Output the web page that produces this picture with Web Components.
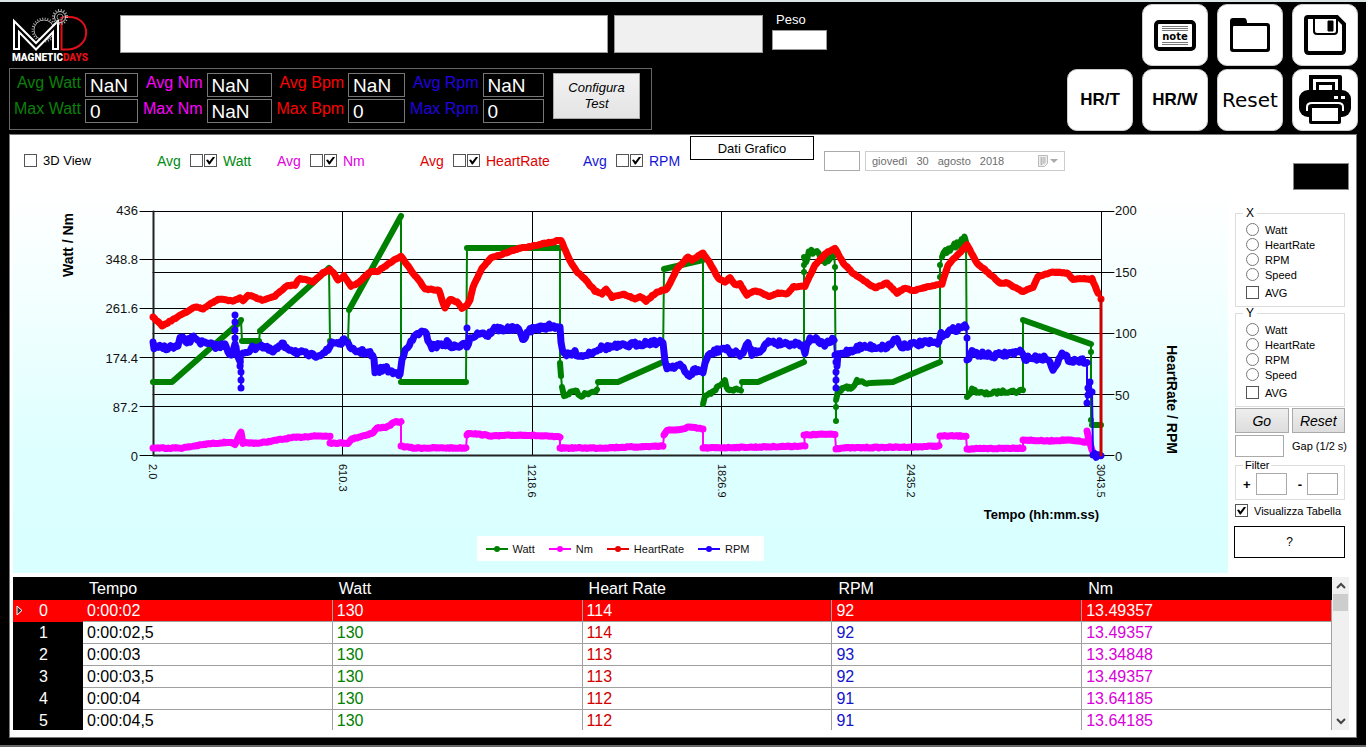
<!DOCTYPE html>
<html lang="it">
<head>
<meta charset="utf-8">
<title>Magnetic Days</title>
<style>
  body { margin: 0; background: #000; font-family: "Liberation Sans", Arial, sans-serif; }
</style>
</head>
<body>
<md-app></md-app>
<script>
const define = (name, html, setup) => {
  const template = document.createElement('template');
  template.innerHTML = html;
  customElements.define(name, class extends HTMLElement {
    connectedCallback() {
      if (this.shadowRoot) return;
      const root = this.attachShadow({ mode: 'open' });
      root.append(template.content.cloneNode(true));
      if (setup) setup(this, root);
    }
  });
};

// Shared look of tick boxes and radio buttons
const controls = `
  * { box-sizing: border-box; }
  input[type=checkbox], input[type=radio] {
    appearance: none; flex: none; width: 13px; height: 13px; margin: 0;
    border: 1px solid #555; background: #fff; display: grid; place-items: center;
  }
  input[type=radio] { border-radius: 50%; border-color: #777; }
  input[type=checkbox]:checked::before {
    content: ""; width: 9px; height: 8px; background: #000;
    clip-path: polygon(0 45%, 22% 38%, 38% 62%, 80% 0, 100% 10%, 42% 100%, 32% 100%);
  }
`;

define('md-logo', `
  <style>
    :host { display: block; width: 76px; }
    svg { display: block; }
    .name { font: 900 10px/13px Roboto, sans-serif; color: #fff; white-space: nowrap; }
    .name b { font-weight: 900; color: #e01018; }
  </style>
  <svg width="76" height="42" viewBox="0 0 76 42" fill="none">
    <circle cx="32" cy="21" r="10" stroke="#aaa" stroke-width="1"/>
    <circle cx="32" cy="21" r="11.5" stroke="#aaa" stroke-width="2" stroke-dasharray="1 1.6"/>
    <path d="M2 40V12L24 34 46 12V40H41V23L24 40.500 7 23V40z" stroke="#fff" stroke-width="2" fill="#000"/>
    <path d="M49.500 8V40.500H56C80 39 80 8 57 8H50" stroke="#e01018" stroke-width="2"/>
    <circle cx="48" cy="8" r="5.5" stroke="#ccc"/>
    <circle cx="48" cy="8" r="7" stroke="#bbb" stroke-width="2" stroke-dasharray="1 1.8"/>
    <circle cx="48" cy="8" r="3" stroke="#888"/>
  </svg>
  <div class="name">MAGNETIC<b>DAYS</b></div>
`);

define('md-stat', `
  <style>
    * { box-sizing: border-box; }
    :host { display: grid; grid-template-columns: auto var(--box, 56px); gap: 2px 4px; }
    label { font-size: 16px; line-height: 20px; height: 24px; text-align: right; white-space: nowrap; }
    input { width: 100%; height: 24px; padding: 2px 3px 0 4px; border: 1px solid #777; background: #000; color: #fff; font: 19px/20px "Liberation Sans", sans-serif; }
  </style>
  <label for="avg"></label><input id="avg" readonly>
  <label for="max"></label><input id="max" readonly>
`, (el, root) => {
  const [a, m] = root.querySelectorAll('label');
  const n = el.getAttribute('name');
  a.textContent = 'Avg ' + n;
  m.textContent = 'Max ' + n;
  root.querySelector('#avg').value = el.getAttribute('avg');
  root.querySelector('#max').value = el.getAttribute('max');
});

define('md-tile', `
  <style>
    :host { display: block; }
    button {
      width: 100%; height: 62px; padding: 0; border: 1px solid #ccc; border-radius: 10px; background: #fff; color: #000;
      display: grid; place-items: center; font: bold 17px "Liberation Sans", sans-serif;
    }
    :host([plain]) button { font: 20px "DejaVu Sans", Verdana, sans-serif; }
  </style>
  <button type="button"><slot></slot></button>
`, (el, root) => {
  if (el.title) root.querySelector('button').setAttribute('aria-label', el.title);
});

define('md-series', `
  <style>
    ${controls}
    :host { display: flex; align-items: center; font-size: 14px; line-height: 16px; }
    label.avg { width: 33px; }
    input#show { margin: 0 6px 0 1px; }
  </style>
  <label class="avg" for="avg">Avg</label>
  <input type="checkbox" id="avg"><input type="checkbox" id="show" checked>
  <label for="show"><slot></slot></label>
`);

define('md-axis', `
  <style>
    ${controls}
    :host { display: block; }
    fieldset { margin: 0; padding: 3px 0 6px 10px; border: 1px solid #dcdcdc; min-width: 0; }
    legend { padding: 0 3px; margin-left: -3px; font-size: 12px; line-height: 12px; }
    label { display: flex; align-items: center; gap: 6px; height: 15px; font-size: 11px; }
    label.check { margin-top: 3px; }
  </style>
  <fieldset><legend></legend>
    <label><input type="radio" name="v">Watt</label>
    <label><input type="radio" name="v">HeartRate</label>
    <label><input type="radio" name="v">RPM</label>
    <label><input type="radio" name="v">Speed</label>
    <label class="check"><input type="checkbox">AVG</label>
  </fieldset>
`, (el, root) => { root.querySelector('legend').textContent = el.getAttribute('name'); });

define('md-chart', `
  <style>
    :host {
      display: grid; grid-template: 245px auto / 40px 100px 1fr 42px 85px; padding-top: 21px; padding-bottom: 12px;
      background: linear-gradient(#fff, #f2ffff 30%, #dff 70%, #d9ffff); color: #111; font-size: 13px;
    }
    .title { font-size: 14px; line-height: 16px; font-weight: bold; color: #000; writing-mode: vertical-rl; }
    .title.left { transform: rotate(180deg); justify-self: end; align-self: start; margin: 2px -23px 2px 0; }
    .title.right { align-self: end; justify-self: start; margin: 0 0 2px 21px; }
    .scale { display: flex; flex-direction: column; justify-content: space-between; margin: -8px 0; line-height: 15px; }
    .scale.y1 { align-items: flex-end; padding-right: 15px; }
    .scale.y2 { padding-left: 14px; }
    svg { display: block; width: 100%; height: 245px; overflow: visible; }
    svg path { vector-effect: non-scaling-stroke; fill: none; stroke-linecap: round; stroke-linejoin: round; }
    .under { grid-column: 3; }
    .ticks { display: flex; justify-content: space-between; margin: 8px -7px 0; font-size: 11px; line-height: 14px; height: 38px; }
    .ticks span { writing-mode: vertical-rl; }
    .xname { text-align: right; font-weight: bold; line-height: 20px; padding: 3px 2px 0 0; color: #000; }
    .legend {
      grid-column: 1 / -1; justify-self: center; margin: 11px 0 0 0; height: 25px; padding: 0 15px 0 9px; background: #fff;
      display: flex; align-items: center; gap: 14px; font-size: 11px;
    }
    .legend span { display: flex; align-items: center; gap: 5px; }
    .legend i { width: 22px; height: 2px; display: grid; place-items: center; align-content: center; background: currentColor; }
    .legend i::before { content: ""; width: 6px; height: 6px; border-radius: 50%; background: currentColor; }
    .legend b { font-weight: normal; color: #111; }
  </style>
  <div class="title left">Watt / Nm</div>
  <div class="scale y1"><span>436</span><span>348.8</span><span>261.6</span><span>174.4</span><span>87.2</span><span>0</span></div>
  <svg viewBox="153 211 948 245" preserveAspectRatio="none" role="img" aria-label="Watt, Nm, HeartRate, RPM"></svg>
  <div class="scale y2"><span>200</span><span>150</span><span>100</span><span>50</span><span>0</span></div>
  <div class="title right">HeartRate / RPM</div>
  <div class="under">
    <div class="ticks"><span>2.0</span><span>610.3</span><span>1218.6</span><span>1826.9</span><span>2435.2</span><span>3043.5</span></div>
    <div class="xname">Tempo (hh:mm.ss)</div>
  </div>
  <div class="legend">
    <span style="color:#008000"><i></i><b>Watt</b></span><span style="color:#f0f"><i></i><b>Nm</b></span>
    <span style="color:#e60000"><i></i><b>HeartRate</b></span><span style="color:#20f"><i></i><b>RPM</b></span>
  </div>
`, (el, root) => {
  const svg = root.querySelector('svg');
  let seed = 7;
  const rnd = () => (seed = (seed * 16807) % 2147483647) / 2147483647 - 0.5;
  const path = (d, stroke, w) => {
    const p = document.createElementNS('http://www.w3.org/2000/svg', 'path');
    p.setAttribute('d', d); p.setAttribute('stroke', stroke); p.setAttribute('stroke-width', w);
    svg.append(p);
  };
  let grid = '';
  for (const y of [211.5, 259.5, 308.5, 357.5, 406.5, 455.5]) grid += `M140 ${y}H1101`;
  for (const y of [272.5, 333.5, 394.5]) grid += `M153 ${y}H1114`;
  for (const y of [211.5, 455.5]) grid += `M1101 ${y}H1114`;
  for (const x of [342.5, 532.5, 721.5, 911.5, 1101.5]) grid += `M${x} 211.5V455.5`;
  path(grid, '#000', 1);
  path('M153.500 211.500V455.500H1101', '#222', 2);

  // "|" separates runs of dense samples; thin lines join one run to the next.
  // A leading "~n" sets the jitter of the run.
  const series = (text, color, noise, width) => {
    let thin = '', thick = '', first = true;
    for (let run of text.split('|')) {
      let n = noise;
      run = run.trim().replace(/^~([\d.]+)\s*/, (_, v) => { n = +v; return ''; });
      const pts = run.split(/\s+/).map(p => p.split(',').map(Number));
      thick += `M${pts[0]}h0.01`;
      if (!first) thin += 'L' + pts[0];
      first = false;
      pts.slice(1).forEach(([x, y], i) => {
        const [px, py] = pts[i], steps = n ? Math.max(1, Math.round(Math.abs(x - px) / 1.5)) : 1;
        for (let s = 1; s <= steps; s++) {
          const t = s / steps;
          thick += `L${(px + (x - px) * t).toFixed(1)},${(py + (y - py) * t + rnd() * n).toFixed(1)}`;
        }
      });
      thin += 'M' + pts[pts.length - 1];
    }
    path(thin, color, 2);
    path(thick, color, width);
  };

  series(`153,382 172,382 240,322|241,320|242,341 259,341|260,331 313,283 329,268|330,341|348,341|349,310 401,216|401,382 466,382|467,248 560,248
    |560,363 561,376|~3 562,387 564,396 575,390 580,396 588,393 597,390|598,382 618,382 663,362|664,269 703,260
    |~3 703,404 705,397 717,388 725,381 728,391 735,389 741,391|742,382 758,382 804,362|804,272|804,265
    |~9 804,257 806,262 810,250 817,251 825,261 830,260 834,253|835,267|835,288|836,421|836,407|~3 836,400 838,391 848,387 852,389 857,381 862,380 868,384|870,383 893,382 940,362
    |940,277|940,265|~7 942,257 947,252 953,246 960,243 966,239|~3 967,397 972,390 985,394 1000,392 1010,391 1018,392 1023,389|1023,320 1091,344|1091,352|1091,420|1092,425 1101,425`, '#008000', 0, 6);
  series(`153,448 182,448 207,444 230,442 235,445 241,432 243,443 260,443 290,438 313,436 330,436|330,443 348,443 352,439 373,433 377,428 387,427 395,422 401,422
    |401,446 413,448 466,448|467,435 468,433 493,436 525,435 560,437|560,448 600,448 663,446|664,435 667,430 680,430 688,427 703,429
    |703,448 760,447 805,446|804,435 835,434|836,449 840,448 913,447 939,446|940,436 966,436|967,449 1023,448|1023,440 1047,441 1067,440 1085,442|1087,431 1089,440 1092,450`, '#ff00ff', 1, 7);
  series(`153,342 154,348 178,347 180,338 187,342 195,337 202,343 220,347 225,343 231,357 235,345|235,315|235,322|235,330|235,338|236,347 237,357 240,360|240,366|241,372|241,380|241,388|243,353 260,345 273,352
    282,345 297,352 313,356 328,351 332,342 340,343 347,340 350,350 370,353 374,360 375,372 385,368 393,373 400,373 402,357 417,333 425,333 432,347 447,343
    453,347 466,345|467,328|467,347 470,337 482,332 488,336 493,329 517,329 524,339 530,330 543,327 560,326 561,343 565,356 575,353 583,356 600,348
    623,346 653,342 663,343 665,360 667,367 680,365 688,376 695,370 703,372 705,363 710,354 723,348 733,353 743,354 748,343 752,353 760,350 770,341 778,343
    803,344 805,355 807,342 813,338 823,345 834,340|835,355|836,362|836,372|836,380|836,388|837,366 838,355 860,347 887,347 897,338 900,346 923,343 939,343 941,335 953,330 966,326|967,338|967,360 972,353
    993,356 1020,352 1025,358 1047,358 1053,368 1062,355 1070,360 1087,361|1087,403|1088,395|1088,388|1090,382|1092,392|1093,455 1101,455`, '#2200ff', 5, 7);
  series(`153,317 162,326 195,307 203,309 218,299 233,301 240,298 243,301 248,295 262,300 275,296 287,286 295,285 300,278 313,282 323,273 330,270 333,272 338,280
    344,276 351,286 358,283 371,271 377,272 390,263 401,256 412,272 418,279 425,289 439,290 442,300 445,308 450,299 457,302 462,308 467,305 470,300 473,287 482,268
    492,257 500,255 517,249 532,246 561,240 570,261 578,273 583,277 595,291 602,294 606,289 612,297 623,294 635,299 640,296 646,301 657,292 667,289 677,269 688,257
    692,260 703,253 710,263 718,278 725,282 730,278 735,285 740,284 747,295 753,291 760,292 769,297 778,293 787,294 793,287 805,286 815,265 825,254 835,248 843,263
    853,273 875,288 887,283 897,293 905,288 913,291 930,286 942,284 948,265 967,245 977,263 1000,283 1007,283 1023,292 1033,287 1038,277 1053,272 1067,273 1073,279
    1092,279 1098,293|1101,299`, '#ff0000', 1, 7);
  path('M1101 299V455', '#c00', 3);
});

define('md-grid', `
  <style>
    * { box-sizing: border-box; }
    :host { display: flex; overflow: hidden; background: #fff; }
    .view { flex: 1; overflow: hidden; }
    table { width: 100%; border-collapse: separate; border-spacing: 0; table-layout: fixed; font-size: 16px; line-height: 20px; }
    th { font-weight: normal; text-align: left; background: #000; color: #fff; padding: 0; }
    thead th { height: 23px; padding-left: 6px; }
    tbody th { padding: 0 0 0 26px; }
    th:first-child { width: 70px; }
    td { height: 22px; padding: 1px 4px 0; border-right: 1px solid #a0a0a0; border-bottom: 1px solid #a0a0a0; }
    td:nth-child(3) { color: #008000; } td:nth-child(4) { color: #d00000; }
    td:nth-child(5) { color: #1414c8; } td:nth-child(6) { color: #d800d8; }
    tr.on th, tr.on td { background: #f00; color: #fff; }
    tr.on th { padding-left: 3px; }
    tr.on th svg { width: 7px; height: 11px; margin-right: 16px; }
    .bar { width: 17px; background: #f0f0f0; display: flex; flex-direction: column; align-items: center; }
    .bar svg { width: 17px; height: 17px; display: block; }
    .thumb { width: 15px; height: 17px; background: #cdcdcd; margin-bottom: auto; }
  </style>
  <div class="view"><table>
    <thead><tr><th></th><th>Tempo</th><th>Watt</th><th>Heart Rate</th><th>RPM</th><th>Nm</th></tr></thead>
    <tbody></tbody>
  </table></div>
  <div class="bar">
    <svg><path d="M5 11l4-4 4 4" fill="none" stroke="#444" stroke-width="2"/></svg>
    <div class="thumb"></div>
    <svg><path d="M5 6l4 4 4-4" fill="none" stroke="#444" stroke-width="2"/></svg>
  </div>
`, (el, root) => {
  const rows = [
    ['0:00:02', 130, 114, 92, '13.49357'], ['0:00:02,5', 130, 114, 92, '13.49357'], ['0:00:03', 130, 113, 93, '13.34848'],
    ['0:00:03,5', 130, 113, 92, '13.49357'], ['0:00:04', 130, 112, 91, '13.64185'], ['0:00:04,5', 130, 112, 91, '13.64185']
  ];
  root.querySelector('tbody').innerHTML = rows.map((r, i) =>
    `<tr${i ? '' : ' class="on"'}><th scope="row">${i ? '' : '<svg viewBox="0 0 7 11"><path d="M1 1l5 4.500-5 4.500z" fill="#333" stroke="#fff"/></svg>'}${i}</th>${r.map(c => `<td>${c}</td>`).join('')}</tr>`).join('');
});

define('md-app', `
  <style>
    ${controls}
    :host { display: flex; flex-direction: column; min-height: 100vh; box-sizing: border-box; border-top: 2px solid #dde4e6; border-bottom: 2px solid #666; background: #000; }
    input, button { font-family: inherit; border-radius: 0; }
    header { display: flex; justify-content: space-between; padding: 2px 8px 3px 9px; }
    .id { display: flex; align-items: flex-start; height: 64px; padding: 5px 0 0 3px; }
    .id > input { height: 38px; margin-top: 6px; border: 1px solid #999; background: #fff; }
    .who { width: 488px; margin-left: 32px; }
    .id .state { width: 149px; margin-left: 6px; background: #f0f0f0; }
    .peso { margin: 1px 0 0 9px; color: #fff; font-size: 13px; line-height: 20px; display: flex; flex-direction: column; }
    .peso span { padding-left: 4px; }
    .peso input { width: 55px; height: 20px; border: 1px solid #999; }
    .stats { display: flex; align-items: flex-start; gap: 5px; border: 1px solid #666; height: 62px; width: 643px; padding: 4px 11px 0 4px; }
    .stats button { width: 87px; height: 46px; margin-left: auto; border: 1px solid #aaa; background: linear-gradient(#f2f2f2, #e4e4e4); font-size: 13px; line-height: 16px; font-style: italic; color: #000; padding: 0 12px; }
    .tiles { display: grid; grid-template-columns: repeat(4, 66px); gap: 3px 9px; }
    .tiles > :first-child { grid-column: 2; }
    .tiles svg { display: block; }
    main { flex: 1; margin: 0 9px 7px; border: 1px solid #777; background: #fff; display: flex; flex-direction: column; padding: 0 7px 7px 3px; color: #000; }
    .work { display: grid; grid-template-columns: 1fr 121px; }
    .bar { height: 55px; display: grid; grid-template-columns: 133px 120px 143px 163px 107px 124px 36px 200px; align-items: center; padding-left: 11px; }
    .bar > label { display: flex; align-items: center; gap: 6px; font-size: 13px; }
    .bar > * { margin-top: -4px; }
    .bar .data { align-self: start; height: 24px; margin-top: 1px; border: 1px solid #000; background: #fff; font-size: 13px; padding: 0; }
    .bar .mini { margin: -4px -10px 0 10px; width: 36px; height: 20px; border: 1px solid #aaa; }
    .date { margin-left: 15px; width: 200px; height: 20px; border: 1px solid #ccc; background: #fff; color: #6d6d6d; font-size: 11px; padding: 0 6px; display: flex; align-items: center; gap: 9px; }
    .date svg { margin-left: auto; }
    aside { padding: 28px 4px 0 7px; font-size: 11px; display: flex; flex-direction: column; }
    .lcd { align-self: flex-end; width: 56px; height: 27px; margin: 0 -4px 17px 0; background: #000; border: 1px solid #888; }
    .two { display: flex; gap: 3px; margin-top: 1px; }
    .two button { flex: 1; height: 25px; padding: 0; border: 1px solid #aaa; background: linear-gradient(#eee, #ddd); font-size: 14px; font-style: italic; color: #000; }
    .gap { display: flex; align-items: center; gap: 8px; margin-top: 2px; white-space: nowrap; }
    aside input:not([type]) { border: 1px solid #aaa; height: 22px; padding: 0; }
    .gap input { width: 49px; }
    .filter { margin: 3px 0 0; padding: 2px 6px 4px 7px; border: 1px solid #dcdcdc; min-width: 0; }
    .filter legend { padding: 0 2px; line-height: 11px; }
    .filter div { display: flex; align-items: center; gap: 5px; font-weight: bold; font-size: 13px; }
    .filter input { width: 31px; }
    .filter input + span { margin-left: auto; }
    .tab { display: flex; align-items: center; gap: 6px; margin-top: 4px; white-space: nowrap; }
    .help { height: 32px; margin: 9px 0 0 -1px; border: 1px solid #000; background: #fff; font-size: 12px; color: #000; }
    md-grid { flex: 1 0 153px; height: 0; min-height: 153px; margin-top: 4px; }
  </style>
  <header>
    <div>
      <div class="id">
        <md-logo></md-logo>
        <input class="who" aria-label="Nome"><input class="state" aria-label="Stato" readonly>
        <label class="peso"><span>Peso</span><input></label>
      </div>
      <div class="stats">
        <md-stat name="Watt" avg="NaN" max="0" style="color:#0b800b;--box:53px"></md-stat>
        <md-stat name="Nm" avg="NaN" max="NaN" style="color:#f0f;--box:65px"></md-stat>
        <md-stat name="Bpm" avg="NaN" max="0" style="color:#f00;--box:57px"></md-stat>
        <md-stat name="Rpm" avg="NaN" max="0" style="color:#2200e0;--box:61px"></md-stat>
        <button type="button">Configura Test</button>
      </div>
    </div>
    <div class="tiles">
      <md-tile title="note"><svg width="42" height="32" viewBox="0 0 42 32"><rect x="2" y="3" width="38" height="27" rx="3" fill="#fff" stroke="#000" stroke-width="4"/><path d="M8 7.500h26M8 9.500h26M8 11.500h26M8 23.500h26M8 25.500h26" stroke="#777"/><text x="21" y="21" text-anchor="middle" font-family="DejaVu Sans" font-weight="bold" font-size="10">note</text></svg></md-tile>
      <md-tile title="Apri"><svg width="42" height="36" viewBox="0 0 42 36"><path d="M1 33V4q0-3 3-3h11q3 0 3 5h20q3 0 3 3v23q0 3-3 3H4q-3 0-3-3z"/><rect x="4" y="9" width="34" height="23" rx="1" fill="#fff"/></svg></md-tile>
      <md-tile title="Salva"><svg width="42" height="40" viewBox="0 0 42 40" fill="none" stroke="#000"><path d="M4 2h29l7 7v26q0 3-3 3H5q-3 0-3-3V4q0-2 2-2z" stroke-width="4"/><path d="M10 3v13q0 3 3 3h17q3 0 3-3V3" stroke-width="2"/><path d="M24 6h5v10h-5z" fill="#000"/></svg></md-tile>
      <md-tile>HR/T</md-tile><md-tile>HR/W</md-tile><md-tile plain>Reset</md-tile>
      <md-tile title="Stampa"><svg width="52" height="50" viewBox="0 0 52 50"><path d="M10 0h31q2 0 2 2v13h-4V4H14v11h-4z"/><path d="M17 16V7h19v9h-3v-6H20v6z"/><rect y="15" width="52" height="27" rx="9"/><path d="M35 21h4v3h-4zM42 21h4v3h-4z" fill="#fff"/><path d="M8 36v-4q0-4 5-4h26q5 0 5 4v4" fill="none" stroke="#fff" stroke-width="2"/><path d="M10 31h32v16q0 2-2 2H12q-2 0-2-2z"/><path d="M13 33h26v13H13z" fill="#fff"/></svg></md-tile>
    </div>
  </header>
  <main>
    <div class="work">
      <div>
        <div class="bar">
          <label><input type="checkbox">3D View</label>
          <md-series style="color:#008a10">Watt</md-series>
          <md-series style="color:#e000e0">Nm</md-series>
          <md-series style="color:#e00000">HeartRate</md-series>
          <md-series style="color:#1414d8">RPM</md-series>
          <button class="data" type="button">Dati Grafico</button>
          <input class="mini" aria-label="Numero">
          <button class="date" type="button" disabled><span>giovedì</span><span>30</span><span>agosto</span><span>2018</span>
            <svg width="20" height="12" viewBox="0 0 20 12"><path d="M.5.500h9v8l-3 3h-6zM2 3h6M2 5h6M2 7h6M2 9h3M3.500 2v8M6 2v7" fill="#eee" stroke="#bbb"/><path d="M12 4h8l-4 4z" fill="#aaa"/></svg>
          </button>
        </div>
        <md-chart></md-chart>
      </div>
      <aside>
        <div class="lcd"></div>
        <md-axis name="X"></md-axis>
        <md-axis name="Y"></md-axis>
        <div class="two"><button type="button">Go</button><button type="button">Reset</button></div>
        <label class="gap"><input>Gap (1/2 s)</label>
        <fieldset class="filter"><legend>Filter</legend><div><span>+</span><input aria-label="Filter +"><span>-</span><input aria-label="Filter -"></div></fieldset>
        <label class="tab"><input type="checkbox" checked>Visualizza Tabella</label>
        <button class="help" type="button">?</button>
      </aside>
    </div>
    <md-grid></md-grid>
  </main>
`);
</script>
</body>
</html>
